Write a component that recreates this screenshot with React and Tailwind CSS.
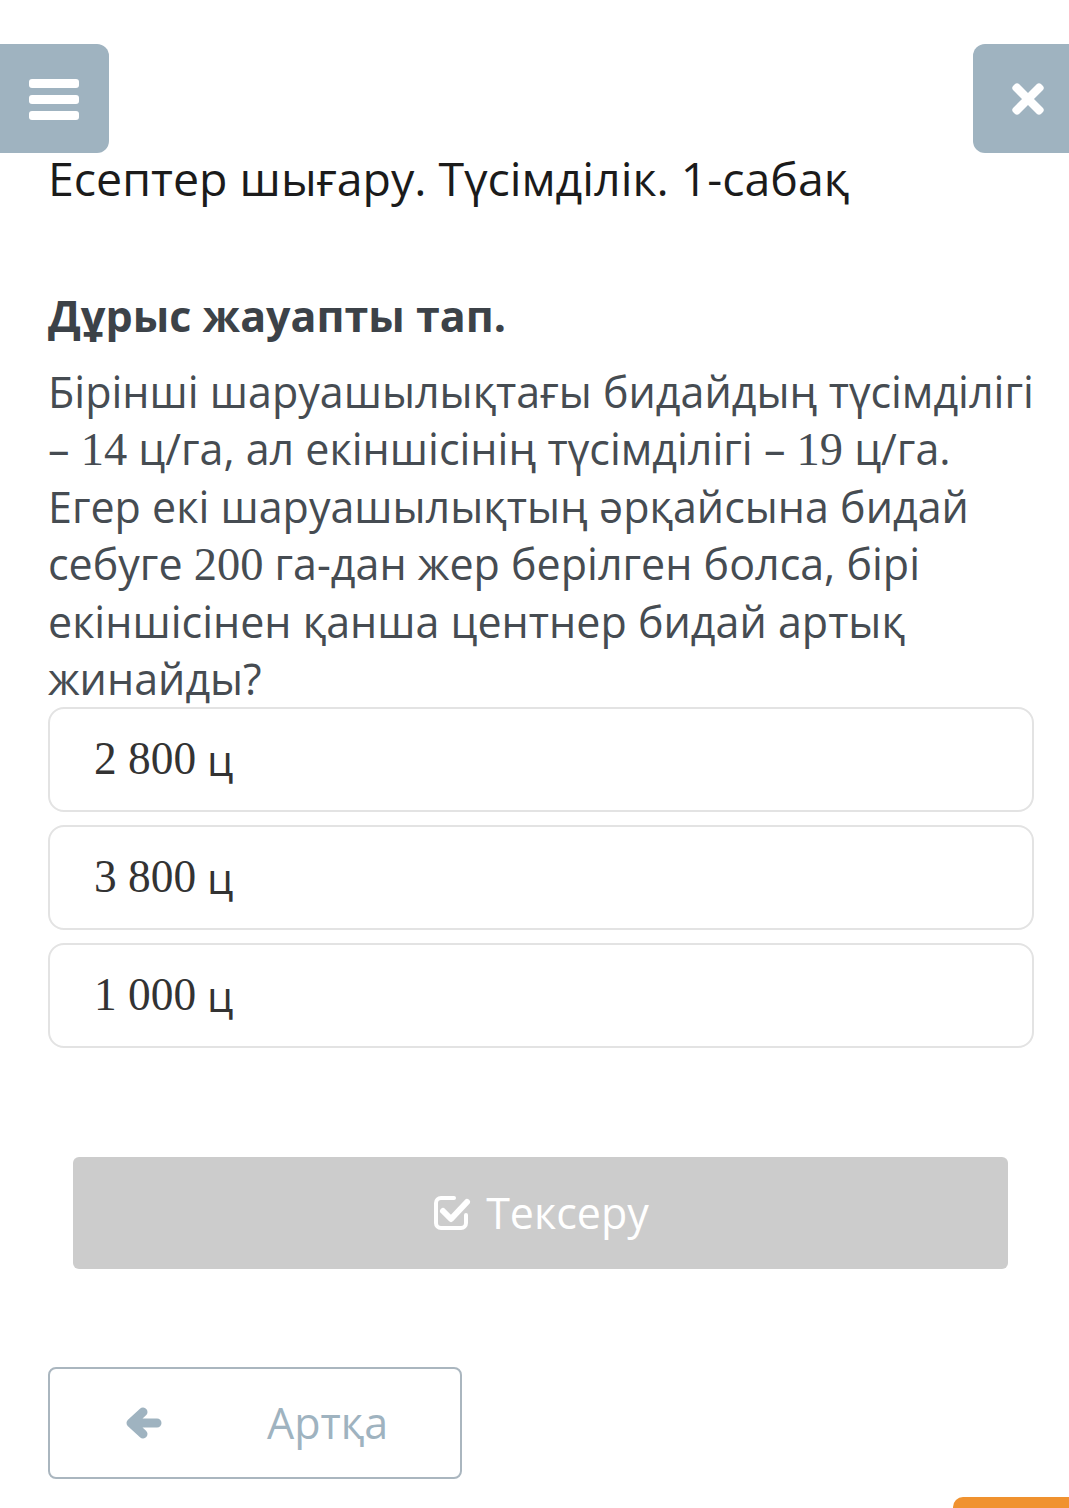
import { FaTimes } from 'react-icons/fa';

const sans = { fontFamily: '"Open Sans", "Noto Sans", sans-serif' };

function Num({ children }) {
  return <span className="font-['Liberation_Serif',serif] text-[1.08em]">{children}</span>;
}

function MenuIcon() {
  return (
    <svg width="50" height="44" viewBox="0 0 50 44">
      <rect x="0" y="2" width="50" height="9" rx="3" fill="white" />
      <rect x="0" y="18" width="50" height="9" rx="3" fill="white" />
      <rect x="0" y="34" width="50" height="9" rx="3" fill="white" />
    </svg>
  );
}

function CheckSquare() {
  return (
    <svg width="40" height="38" viewBox="0 0 40 38" fill="none">
      <path d="M22 4H9a5 5 0 0 0-5 5v20a5 5 0 0 0 5 5h20a5 5 0 0 0 5-5v-8" stroke="white" strokeWidth="4" strokeLinecap="round" />
      <path d="M11 17l8 8 16-17" stroke="white" strokeWidth="6" strokeLinecap="round" strokeLinejoin="round" />
    </svg>
  );
}

function BackArrow() {
  return (
    <svg width="38" height="36" viewBox="0 0 38 36" fill="none">
      <path d="M33 18H9M19 7L7 18l12 11" stroke="#9fb3c0" strokeWidth="9" strokeLinecap="round" strokeLinejoin="round" />
    </svg>
  );
}

const Option = ({ value }) => (
  <div className="h-[105px] border-2 border-[#e3e3e3] rounded-[16px] flex items-center pl-[44px] text-[42px] text-[#333]">
    <Num>{value}</Num>&nbsp;ц
  </div>
);

export default function App() {
  return (
    <div className="w-[1069px] min-h-[1508px] bg-white relative overflow-hidden" style={sans}>
      <div className="flex justify-between pt-[44px]">
        <div className="w-[109px] h-[109px] bg-[#9fb3c0] rounded-r-[12px] flex items-center justify-center pr-[2px]">
          <MenuIcon />
        </div>
        <div className="w-[96px] h-[109px] bg-[#9fb3c0] rounded-l-[12px] flex items-center justify-center pl-[14px] text-white">
          <FaTimes size={46} />
        </div>
      </div>

      <div className="px-[48px]">
        <h1 className="text-[46.5px] leading-[56px] text-[#1b1b1b] -mt-[3px] whitespace-nowrap">Есептер шығару. Түсімділік. 1-сабақ</h1>

        <h2 className="mt-[82px] text-[43px] leading-[56px] font-bold text-[#3c4248]">Дұрыс жауапты тап.</h2>

        <p className="mt-[19px] text-[43px] leading-[57px] text-[#464c52] whitespace-nowrap">
          Бірінші шаруашылықтағы бидайдың түсімділігі<br />
          – <Num>14</Num> ц/га, ал екіншісінің түсімділігі – <Num>19</Num> ц/га.<br />
          Егер екі шаруашылықтың әрқайсына бидай<br />
          себуге <Num>200</Num> га-дан жер берілген болса, бірі<br />
          екіншісінен қанша центнер бидай артық<br />
          жинайды?
        </p>

        <div className="flex flex-col gap-[13px] mt-[0px] w-[986px]">
          <Option value="2 800" />
          <Option value="3 800" />
          <Option value="1 000" />
        </div>

        <div className="mt-[109px] ml-[25px] w-[935px] h-[112px] bg-[#cccccc] rounded-[6px] flex items-center justify-center gap-[14px] text-white text-[43px]">
          <CheckSquare />
          <span>Тексеру</span>
        </div>

        <div className="mt-[98px] w-[414px] h-[112px] border-2 border-[#aab6bf] rounded-[8px] flex items-center pl-[74px] text-[#9fb3c0]">
          <BackArrow />
          <span className="ml-[105px] text-[43px]">Артқа</span>
        </div>
      </div>

      <div className="absolute right-0 bottom-0 w-[116px] h-[11px] bg-[#f0922f] rounded-tl-[10px]" />
    </div>
  );
}
